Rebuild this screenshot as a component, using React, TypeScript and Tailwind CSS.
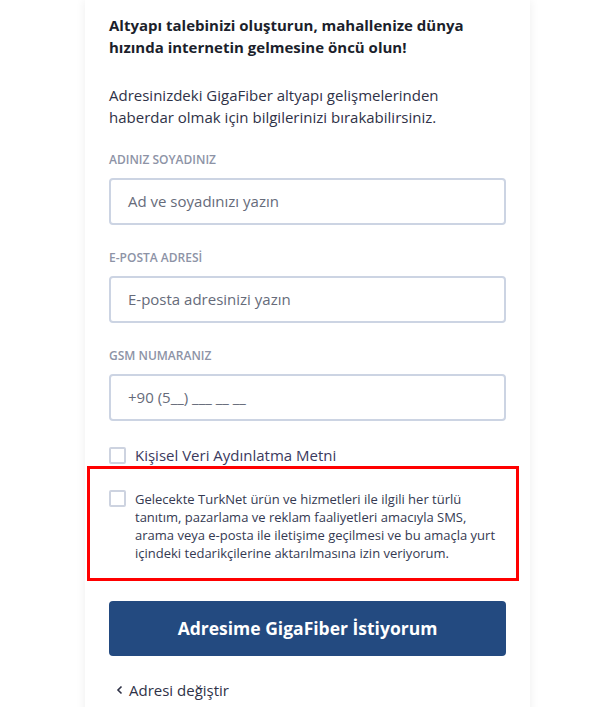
import React from "react";

function Field({ label, placeholder, mt }: { label: string; placeholder: string; mt: string }) {
  return (
    <div className={mt}>
      <div className="text-[12px] leading-[16px] font-semibold uppercase text-[#8d93a6]">{label}</div>
      <div className="mt-[10px] h-[47px] rounded-[4px] border-2 border-[#ccd4e3] flex items-center px-[17px]">
        <span className="text-[15px] text-[#666b7a]">{placeholder}</span>
      </div>
    </div>
  );
}

function Box() {
  return <div className="w-[17px] h-[17px] shrink-0 rounded-[2px] border-2 border-[#cdd3e0] bg-white" />;
}

export default function App() {
  return (
    <div
      className="w-[612px] h-[707px] overflow-hidden bg-white flex"
      style={{ fontFamily: '"Open Sans", "Noto Sans", sans-serif' }}
    >
      <div className="ml-[85px] w-[445px] h-[760px] shrink-0 bg-white shadow-[0_0_10px_rgba(0,0,0,0.07)] px-[24px] pt-[14px] text-[#2c3045]">
        <h1 className="text-[15px] leading-[22px] font-bold text-[#1c1f2c]">
          Altyapı talebinizi oluşturun, mahallenize dünya hızında internetin gelmesine öncü olun!
        </h1>
        <p className="mt-[26px] text-[15px] leading-[22px] text-[#2f3247]">
          Adresinizdeki GigaFiber altyapı gelişmelerinden haberdar olmak için bilgilerinizi bırakabilirsiniz.
        </p>
        <Field mt="mt-[24px]" label="Adınız Soyadınız" placeholder="Ad ve soyadınızı yazın" />
        <Field mt="mt-[25px]" label="E-posta Adresi̇" placeholder="E-posta adresinizi yazın" />
        <Field mt="mt-[25px]" label="GSM Numaranız" placeholder="+90 (5__) ___ __ __" />
        <div className="mt-[23px] flex items-center gap-[9px] h-[22px]">
          <Box />
          <span className="text-[15px] leading-[22px] text-[#3b3a5e]">Kişisel Veri Aydınlatma Metni</span>
        </div>
        <div className="ml-[-22px] mr-[-13px] border-[3px] border-[#ff0000] pl-[19px] pt-[21px] pb-[16px] flex gap-[9px]">
          <Box />
          <p className="w-[366px] text-[13px] leading-[18px] text-[#353a52]">
            Gelecekte TurkNet ürün ve hizmetleri ile ilgili her türlü tanıtım, pazarlama ve reklam faaliyetleri amacıyla SMS, arama veya e-posta ile iletişime geçilmesi ve bu amaçla yurt içindeki tedarikçilerine aktarılmasına izin veriyorum.
          </p>
        </div>
        <button className="mt-[20px] w-full h-[55px] rounded-[4px] bg-[#234a80] text-white text-[17.5px] font-bold flex items-center justify-center">
          Adresime GigaFiber İstiyorum
        </button>
        <div className="mt-[23px] flex items-center gap-[4px] pl-[6px] text-[15px] leading-[22px] text-[#2f3247]">
          <svg width="10" height="12" viewBox="0 0 10 12" fill="none">
            <path d="M6.5 2.5 L3 6 L6.5 9.5" stroke="#2f3247" strokeWidth="1.6" />
          </svg>
          <span>Adresi değiştir</span>
        </div>
      </div>
    </div>
  );
}
